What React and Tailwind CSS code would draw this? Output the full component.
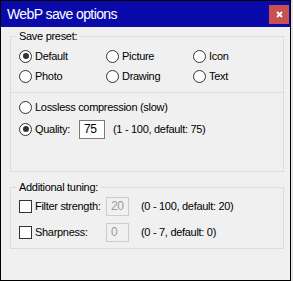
import React from "react";

const font = { fontFamily: '"Liberation Sans", Arial, sans-serif' };

function Radio({ checked }) {
  return (
    <span className="relative inline-flex h-[13px] w-[13px] shrink-0 items-center justify-center rounded-full border border-[#333333] bg-white">
      {checked && <span className="h-[6px] w-[6px] rounded-full bg-[#333333]" />}
    </span>
  );
}

function Check() {
  return <span className="inline-block h-[13px] w-[13px] shrink-0 border border-[#333333] bg-white" />;
}

function RadioItem({ label, checked }) {
  return (
    <div className="flex items-center gap-[3px]">
      <Radio checked={checked} />
      <span>{label}</span>
    </div>
  );
}

export default function App() {
  return (
    <div className="h-[281px] w-[293px] bg-[#e6e6e6] text-[11px] leading-[14px] text-black tracking-[-0.3px]" style={font}>
      <div className="flex h-[281px] w-[291px] flex-col border border-black bg-[#f0f0f0]">
        <div className="flex h-[26px] shrink-0 items-center justify-between bg-[#0a0aaa] pl-[6px] pr-[1px]">
          <span className="text-[14px] leading-[16px] tracking-[-0.6px] text-white">WebP save options</span>
          <div className="flex h-[19px] w-[20px] items-center justify-center bg-[#c75050]">
            <svg width="7" height="7" viewBox="0 0 7 7">
              <path d="M1 1 L6 6 M6 1 L1 6" stroke="white" strokeWidth="1.8" />
            </svg>
          </div>
        </div>
        <div className="flex flex-1 flex-col pl-[9px] pt-[2px]">
          <fieldset className="w-[274px] border border-[#dcdcdc]">
            <legend className="ml-[6px] px-[2px]">Save preset:</legend>
            <div className="grid grid-cols-[87px_87px_1fr] pl-[8px] pt-[3px]">
              <div className="flex h-[20px] items-center"><RadioItem label="Default" checked /></div>
              <div className="flex h-[20px] items-center"><RadioItem label="Picture" /></div>
              <div className="flex h-[20px] items-center"><RadioItem label="Icon" /></div>
              <div className="flex h-[20px] items-center"><RadioItem label="Photo" /></div>
              <div className="flex h-[20px] items-center"><RadioItem label="Drawing" /></div>
              <div className="flex h-[20px] items-center"><RadioItem label="Text" /></div>
            </div>
            <div className="mt-[6px] border-t border-[#dcdcdc] pl-[8px] pt-[4px] pb-[31px]">
              <div className="flex h-[20px] items-center"><RadioItem label="Lossless compression (slow)" /></div>
              <div className="mt-[1px] flex h-[22px] items-center">
                <div className="w-[60px]"><RadioItem label="Quality:" checked /></div>
                <div className="flex h-[19px] w-[26px] items-center border border-[#7a7a7a] bg-white pl-[4px] text-[12px]">75</div>
                <span className="ml-[8px]">(1 - 100, default: 75)</span>
              </div>
            </div>
          </fieldset>
          <fieldset className="mt-[8px] w-[274px] border border-[#dcdcdc] pb-[6px]">
            <legend className="ml-[6px] px-[2px]">Additional tuning:</legend>
            <div className="pl-[8px] pt-[2px]">
              <div className="flex h-[20px] items-center">
                <div className="flex w-[87px] items-center gap-[3px]"><Check /><span>Filter strength:</span></div>
                <div className="flex h-[19px] w-[23px] items-center border border-[#cccccc] bg-[#f0f0f0] pl-[4px] text-[12px] text-[#9a9a9a]">20</div>
                <span className="ml-[12px]">(0 - 100, default: 20)</span>
              </div>
              <div className="mt-[6px] flex h-[20px] items-center">
                <div className="flex w-[87px] items-center gap-[3px]"><Check /><span>Sharpness:</span></div>
                <div className="flex h-[19px] w-[23px] items-center border border-[#cccccc] bg-[#f0f0f0] pl-[4px] text-[12px] text-[#9a9a9a]">0</div>
                <span className="ml-[12px]">(0 - 7, default: 0)</span>
              </div>
            </div>
          </fieldset>
        </div>
      </div>
    </div>
  );
}
